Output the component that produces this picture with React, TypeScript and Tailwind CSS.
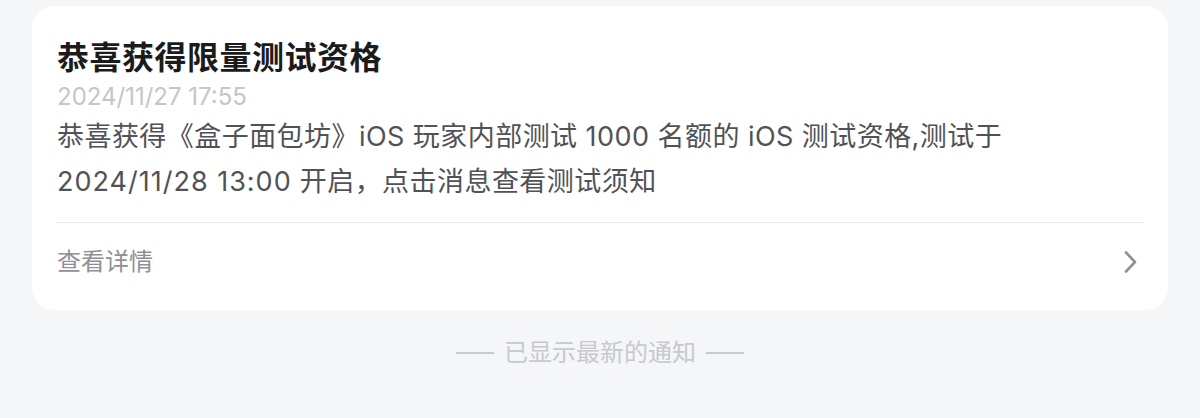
import React from "react";

const FONT = 'Inter, "Noto Sans CJK SC", sans-serif';

export default function App() {
  return (
    <div className="w-[1200px] h-[418px] bg-[#f5f6f8] pt-[6px] px-[32px]" style={{ fontFamily: FONT }}>
      <div className="bg-white rounded-[22px] pt-[30px] px-[25px]">
        <div className="text-[32px] leading-[44px] font-bold tracking-[0.5px] text-[#1b1b1b]">恭喜获得限量测试资格</div>
        <div className="text-[24px] leading-[34px] text-[#c3c6cc]">2024/11/27 17:55</div>
        <div className="text-[27px] leading-[45px] tracking-[0.45px] text-[#505257]">
          恭喜获得《盒子面包坊》iOS 玩家内部测试 1000 名额的 iOS 测试资格,测试于
          <br />
          <span className="tracking-[1px]">2024/11/28 13:00</span> 开启，点击消息查看测试须知
        </div>
        <div className="mt-[18px] h-px bg-[#e9ebee]" />
        <div className="h-[78px] pb-[1px] flex items-center justify-between">
          <span className="text-[24px] leading-[34px] text-[#8e9096]">查看详情</span>
          <svg width="14" height="24" viewBox="0 0 14 24" fill="none" className="mr-[5px]">
            <path d="M2 2.5 L11 12 L2 21.5" stroke="#8e9096" strokeWidth="2.6" strokeLinecap="round" strokeLinejoin="round" />
          </svg>
        </div>
        <div className="h-[9px]" />
      </div>
      <div className="mt-[26px] flex items-center justify-center gap-[10px]">
        <div className="w-[38px] h-[2px] bg-[#c6c9ce]" />
        <span className="text-[24px] leading-[34px] text-[#c6c9ce]">已显示最新的通知</span>
        <div className="w-[38px] h-[2px] bg-[#c6c9ce]" />
      </div>
    </div>
  );
}
